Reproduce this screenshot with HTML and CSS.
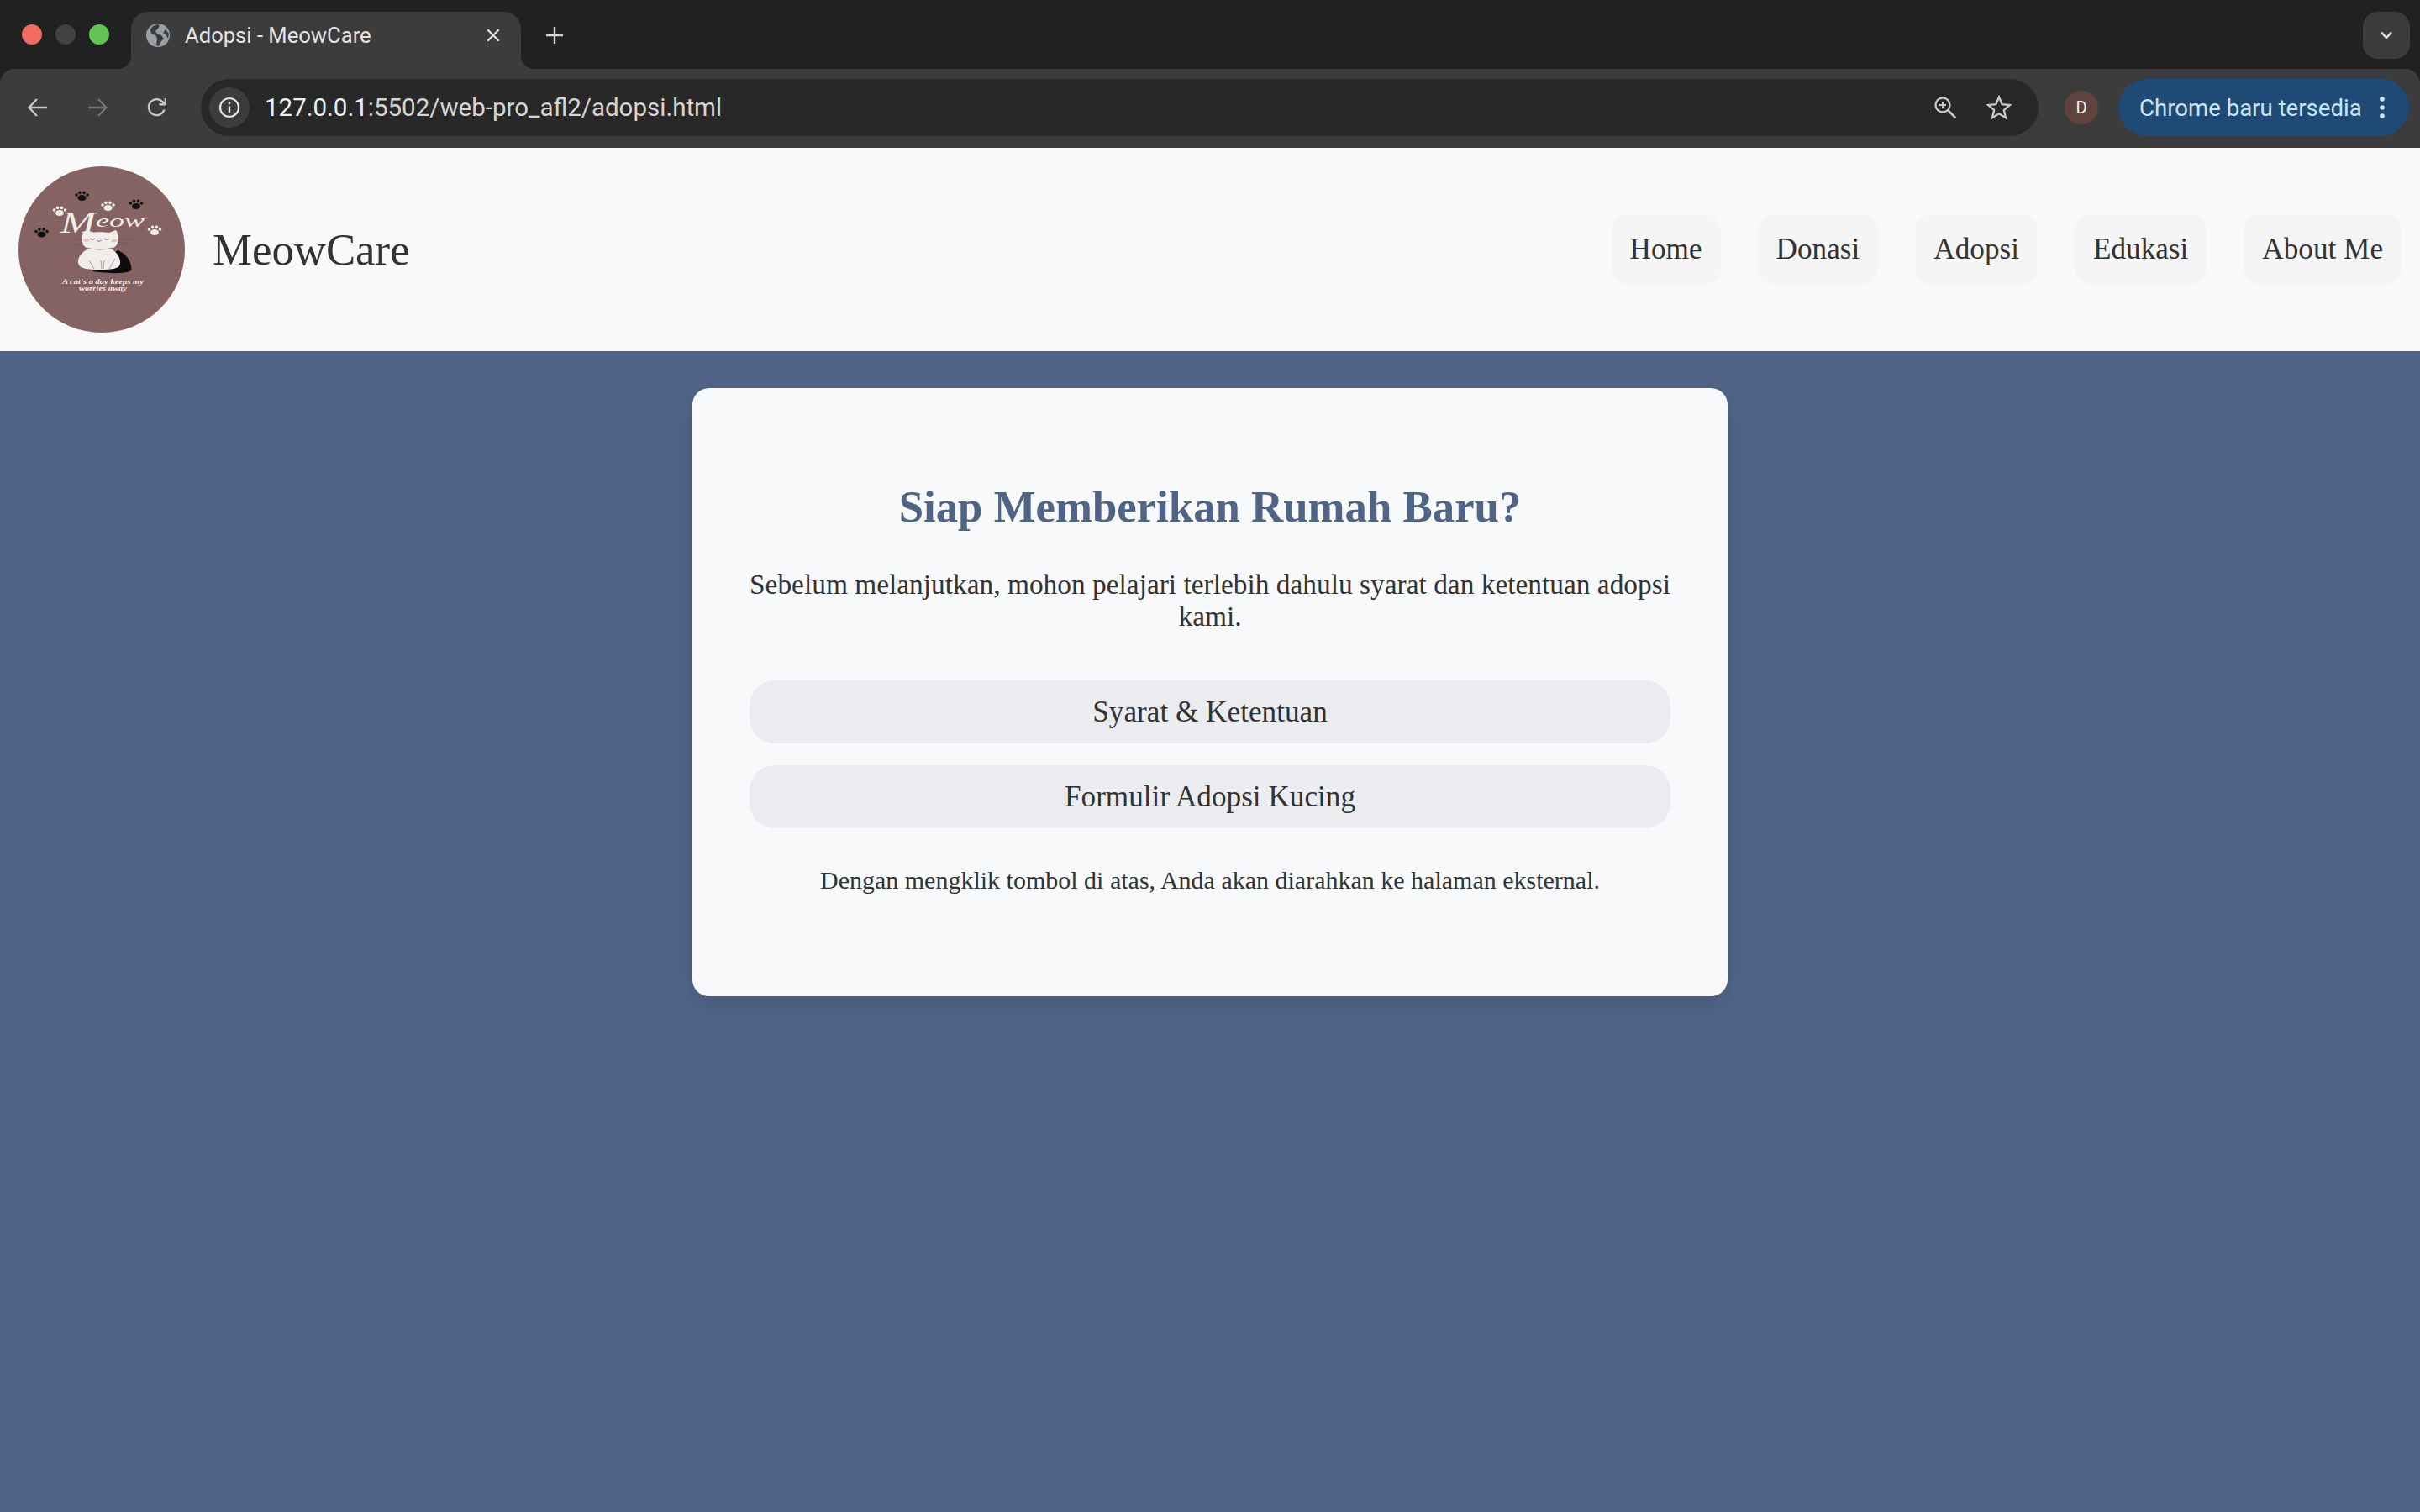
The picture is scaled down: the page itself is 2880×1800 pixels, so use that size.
FILE: index.html
```html
<!DOCTYPE html>
<html lang="en">
<head>
    <meta charset="UTF-8">
    <meta name="viewport" content="width=device-width, initial-scale=1.0">
    <title>Adopsi - MeowCare</title>
    <link rel="stylesheet" href="styles.css">
</head>
<body>
    <div class="browser">
        <div class="tabbar">
            <div class="lights">
                <span class="light red"></span>
                <span class="light grey"></span>
                <span class="light green"></span>
            </div>
            <div class="tab">
                <svg class="favicon" viewBox="0 0 28 28">
                    <circle cx="14" cy="14" r="14" fill="#9aa0a6"/>
                    <path d="M13 1 L8 3 L5 7 L6 12 L11 14 L13 18 L12 26 L15 27 L18 21 L21 18 L18 14 L13 12 L11 9 L14 6 L16 2 Z M23 7 L27 12 L26 18 L23 13 L20 11 Z" fill="#3c3c3c"/>
                </svg>
                <span class="tab-title">Adopsi - MeowCare</span>
                <svg class="tab-close" viewBox="0 0 16 16">
                    <path d="M2 2 L14 14 M14 2 L2 14" stroke="#e3e3e3" stroke-width="2" fill="none"/>
                </svg>
            </div>
            <svg class="new-tab" viewBox="0 0 22 22">
                <path d="M11 1 V21 M1 11 H21" stroke="#d6d6d6" stroke-width="2.4" fill="none"/>
            </svg>
            <div class="tab-menu">
                <svg viewBox="0 0 16 10" width="16" height="10">
                    <path d="M2 1.5 L8 8 L14 1.5" stroke="#e3e3e3" stroke-width="2.4" fill="none"/>
                </svg>
            </div>
        </div>
        <div class="toolbar">
            <svg class="tool-icon" viewBox="0 0 26 26">
                <path d="M24 13 H3 M12 3 L2.5 13 L12 23" stroke="#c4c7c5" stroke-width="2.4" fill="none"/>
            </svg>
            <svg class="tool-icon" viewBox="0 0 26 26">
                <path d="M2 13 H23 M14 3 L23.5 13 L14 23" stroke="#727574" stroke-width="2.4" fill="none"/>
            </svg>
            <svg class="tool-icon" viewBox="0 0 26 26">
                <path d="M21.5 15.5 A9.5 9.5 0 1 1 19.5 6.2 L22.5 9 M22.8 2 V9.3 H15.5" stroke="#c4c7c5" stroke-width="2.4" fill="none"/>
            </svg>
            <div class="omnibox">
                <div class="info-chip">
                    <svg viewBox="0 0 26 26" width="26" height="26">
                        <circle cx="13" cy="13" r="11" stroke="#e3e3e3" stroke-width="2.2" fill="none"/>
                        <path d="M13 11.5 V19" stroke="#e3e3e3" stroke-width="2.4"/>
                        <circle cx="13" cy="7.8" r="1.5" fill="#e3e3e3"/>
                    </svg>
                </div>
                <span class="url"><span class="url-host">127.0.0.1</span>:5502/web-pro_afl2/adopsi.html</span>
                <svg class="zoom-icon" viewBox="0 0 28 28">
                    <circle cx="11" cy="11" r="8.5" stroke="#c7c7c7" stroke-width="2.4" fill="none"/>
                    <path d="M17 17 L26.5 26.5" stroke="#c7c7c7" stroke-width="2.6"/>
                    <path d="M11 7 V15 M7 11 H15" stroke="#c7c7c7" stroke-width="2.2"/>
                </svg>
                <svg class="star-icon" viewBox="0 0 30 30">
                    <path d="M15 2.5 L18.6 11.2 L27.8 12 L20.8 18.1 L23 27.2 L15 22.3 L7 27.2 L9.2 18.1 L2.2 12 L11.4 11.2 Z" stroke="#c7c7c7" stroke-width="2.4" stroke-linejoin="miter" fill="none"/>
                </svg>
            </div>
            <div class="avatar">D</div>
            <div class="update-pill">
                <span>Chrome baru tersedia</span>
                <svg viewBox="0 0 6 26" width="6" height="26">
                    <circle cx="3" cy="3" r="2.8" fill="#d3e3fd"/>
                    <circle cx="3" cy="13" r="2.8" fill="#d3e3fd"/>
                    <circle cx="3" cy="23" r="2.8" fill="#d3e3fd"/>
                </svg>
            </div>
        </div>
    </div>

    <nav class="navbar">
        <div class="brand">
            <svg class="logo" viewBox="0 0 198 198">
                <circle cx="99" cy="99" r="99" fill="#846362"/>
                <g fill="#111111">
                    <g transform="translate(75.5 35)"><ellipse cx="0" cy="2.5" rx="5" ry="3.6"/><circle cx="-6.5" cy="-1" r="1.8"/><circle cx="-2.5" cy="-3.6" r="1.8"/><circle cx="2.5" cy="-3.6" r="1.8"/><circle cx="6.5" cy="-1" r="1.8"/></g>
                    <g transform="translate(140 45)"><ellipse cx="0" cy="2.5" rx="5" ry="3.6"/><circle cx="-6.5" cy="-1" r="1.8"/><circle cx="-2.5" cy="-3.6" r="1.8"/><circle cx="2.5" cy="-3.6" r="1.8"/><circle cx="6.5" cy="-1" r="1.8"/></g>
                    <g transform="translate(27.5 78.5)"><ellipse cx="0" cy="2.5" rx="5" ry="3.6"/><circle cx="-6.5" cy="-1" r="1.8"/><circle cx="-2.5" cy="-3.6" r="1.8"/><circle cx="2.5" cy="-3.6" r="1.8"/><circle cx="6.5" cy="-1" r="1.8"/></g>
                </g>
                <g fill="#f1eeea">
                    <g transform="translate(106.5 47)"><ellipse cx="0" cy="2.5" rx="5" ry="3.6"/><circle cx="-6.5" cy="-1" r="1.8"/><circle cx="-2.5" cy="-3.6" r="1.8"/><circle cx="2.5" cy="-3.6" r="1.8"/><circle cx="6.5" cy="-1" r="1.8"/></g>
                    <g transform="translate(49 53)"><ellipse cx="0" cy="2.5" rx="5" ry="3.6"/><circle cx="-6.5" cy="-1" r="1.8"/><circle cx="-2.5" cy="-3.6" r="1.8"/><circle cx="2.5" cy="-3.6" r="1.8"/><circle cx="6.5" cy="-1" r="1.8"/></g>
                    <g transform="translate(162 76)"><ellipse cx="0" cy="2.5" rx="5" ry="3.6"/><circle cx="-6.5" cy="-1" r="1.8"/><circle cx="-2.5" cy="-3.6" r="1.8"/><circle cx="2.5" cy="-3.6" r="1.8"/><circle cx="6.5" cy="-1" r="1.8"/></g>
                </g>
                <text class="logo-script logo-script-big" x="50" y="79" textLength="42" lengthAdjust="spacingAndGlyphs">M</text>
                <text class="logo-script" x="92" y="72" textLength="58" lengthAdjust="spacingAndGlyphs">eow</text>
                <path d="M118 100 C130 104 136 118 134 124 C128 128 110 128 88 125 Z" fill="#0d0b0b"/>
                <path d="M76 88 C75 82 77 78 79 77 L85 79 C92 78 102 78 108 79 L116 76 C118 78 119 84 118 88 C119 93 115 97 110 98 C118 103 122 110 121 116 C120 122 112 123 97 123 C82 123 72 122 71 115 C70 108 76 102 83 98 C78 96 75 92 76 88 Z" fill="#f0edea"/>
                <path d="M85 86 Q88 89 91 86 M102 86 Q105 89 108 86 M93 88 Q96 91 99 88 M80 97 Q96 101 113 97" stroke="#5c5250" stroke-width="0.7" fill="none"/>
                <path d="M66 87 H76 M68 94 L77 91 M118 87 L135 87 M118 90 L133 93 M98 112 L99 122 M102 112 L101 122 M115 110 L108 122 M84 112 L90 122" stroke="#5c5250" stroke-width="0.5" fill="none"/>
                <ellipse cx="81" cy="88" rx="3.4" ry="1.8" fill="#e3c1b8"/>
                <ellipse cx="114" cy="88.5" rx="3.4" ry="1.8" fill="#e3c1b8"/>
                <text class="logo-small" x="52" y="140" textLength="97" lengthAdjust="spacingAndGlyphs">A cat's a day keeps my</text>
                <text class="logo-small" x="72" y="148" textLength="57" lengthAdjust="spacingAndGlyphs">worries away</text>
            </svg>
            <span class="brand-name">MeowCare</span>
        </div>
        <ul class="nav-links">
            <li><a href="#">Home</a></li>
            <li><a href="#">Donasi</a></li>
            <li><a href="#">Adopsi</a></li>
            <li><a href="#">Edukasi</a></li>
            <li><a href="#">About Me</a></li>
        </ul>
    </nav>

    <main class="card">
        <h2>Siap Memberikan Rumah Baru?</h2>
        <p class="lead">Sebelum melanjutkan, mohon pelajari terlebih dahulu syarat dan ketentuan adopsi kami.</p>
        <div class="actions">
            <a class="btn" href="#">Syarat &amp; Ketentuan</a>
            <a class="btn" href="#">Formulir Adopsi Kucing</a>
        </div>
        <p class="note">Dengan mengklik tombol di atas, Anda akan diarahkan ke halaman eksternal.</p>
    </main>
</body>
</html>
```

FILE: styles.css
```css
* {
    box-sizing: border-box;
}
html, body {
    margin: 0;
    min-height: 100%;
}
body {
    min-height: 1800px;
    background-color: #4f6487;
    color: #333333;
    font-family: "Liberation Serif", "Times New Roman", serif;
}

/* browser chrome */
.browser {
    background-color: #202222;
    font-family: Roboto, "Liberation Sans", sans-serif;
}
.tabbar {
    display: flex;
    align-items: flex-start;
    height: 82px;
    padding: 14px 12px 0 26px;
}
.lights {
    display: flex;
    gap: 16px;
    margin-top: 15px;
    width: 130px;
}
.light {
    width: 24px;
    height: 24px;
    border-radius: 50%;
}
.red { background-color: #f26b60; }
.grey { background-color: #3f4343; }
.green { background-color: #61c554; }
.tab {
    position: relative;
    display: flex;
    align-items: center;
    width: 464px;
    height: 68px;
    padding: 0 24px 12px 18px;
    background-color: #3c3c3c;
    border-radius: 20px 20px 0 0;
    color: #e3e3e3;
    font-size: 25.6px;
}
.tab::before,
.tab::after {
    content: "";
    position: absolute;
    bottom: 0;
    width: 16px;
    height: 16px;
}
.tab::before {
    left: -16px;
    background: radial-gradient(circle at 0 0, transparent 16px, #3c3c3c 16.5px);
}
.tab::after {
    right: -16px;
    background: radial-gradient(circle at 100% 0, transparent 16px, #3c3c3c 16.5px);
}
.favicon {
    width: 28px;
    height: 28px;
    margin-right: 18px;
}
.tab-title {
    flex: 1;
}
.tab-close {
    width: 18px;
    height: 18px;
}
.new-tab {
    width: 22px;
    height: 22px;
    margin: 17px 0 0 29px;
}
.tab-menu {
    display: flex;
    align-items: center;
    justify-content: center;
    width: 56px;
    height: 56px;
    margin-left: auto;
    background-color: #3c3c3c;
    border-radius: 18px;
}
.toolbar {
    display: flex;
    align-items: center;
    height: 94px;
    padding: 12px 12px 14px 32px;
    background-color: #3c3c3c;
    border-radius: 18px 18px 0 0;
}
.tool-icon {
    width: 26px;
    height: 26px;
    margin-right: 45px;
}
.tool-icon:nth-child(3) {
    margin-right: 0;
}
.omnibox {
    display: flex;
    align-items: center;
    width: 2187px;
    height: 68px;
    margin-left: 39px;
    padding: 0 32px 0 10px;
    background-color: #282828;
    border-radius: 34px;
}
.info-chip {
    display: flex;
    align-items: center;
    justify-content: center;
    width: 48px;
    height: 48px;
    border-radius: 50%;
    background-color: #3c3c3c;
}
.url {
    flex: 1;
    margin-left: 18px;
    color: #d5d5d5;
    font-size: 29.5px;
}
.url-host {
    color: #eeeeee;
}
.zoom-icon {
    width: 28px;
    height: 28px;
}
.star-icon {
    width: 30px;
    height: 30px;
    margin-left: 35px;
}
.avatar {
    display: flex;
    align-items: center;
    justify-content: center;
    width: 40px;
    height: 40px;
    margin-left: 31px;
    border-radius: 50%;
    background-color: #5e443c;
    color: #f1f1f1;
    font-size: 20px;
}
.update-pill {
    display: flex;
    align-items: center;
    justify-content: space-between;
    width: 346px;
    height: 68px;
    margin-left: 24px;
    padding: 0 29px 0 25px;
    border-radius: 34px;
    background-color: #1f4a75;
    color: #c9e3fb;
    font-size: 27.6px;
}

/* site header */
.navbar {
    display: flex;
    align-items: center;
    justify-content: space-between;
    padding: 22px;
    background-color: #f9f9f9;
}
.brand {
    display: flex;
    align-items: center;
    gap: 33px;
}
.logo {
    display: block;
    width: 198px;
    height: 198px;
}
.logo-script {
    fill: #f1eeea;
    font-family: "Liberation Serif", serif;
    font-style: italic;
    font-size: 22px;
}
.logo-script-big {
    font-size: 36px;
}
.logo-small {
    fill: #f1eeea;
    font-family: "Liberation Serif", serif;
    font-style: italic;
    font-weight: bold;
    font-size: 7.5px;
}
.brand-name {
    font-size: 52.8px;
}
.nav-links {
    display: flex;
    gap: 44px;
    margin: 0;
    padding: 0;
    list-style: none;
}
.nav-links a {
    display: block;
    padding: 22px;
    border-radius: 20px;
    background-color: #f5f5f5;
    color: #333333;
    font-size: 35.2px;
    text-decoration: none;
}

/* adoption card */
.card {
    width: 1232px;
    margin: 44px auto 0;
    padding: 111px 68px 121px;
    border-radius: 20px;
    background-color: #f8f9fb;
    box-shadow: 0 8px 24px rgba(0, 0, 0, 0.1);
    text-align: center;
}
.card h2 {
    margin: 0 0 44px;
    color: #4f6487;
    font-size: 52.8px;
}
.lead {
    margin: 0 0 57px;
    font-size: 33.4px;
}
.actions {
    display: flex;
    flex-direction: column;
    gap: 26px;
}
.btn {
    display: block;
    padding: 17.5px;
    border-radius: 30px;
    background-color: #ebecef;
    color: #333333;
    font-size: 35.2px;
    text-decoration: none;
}
.note {
    margin: 45px 0 0;
    font-size: 30px;
}
```
